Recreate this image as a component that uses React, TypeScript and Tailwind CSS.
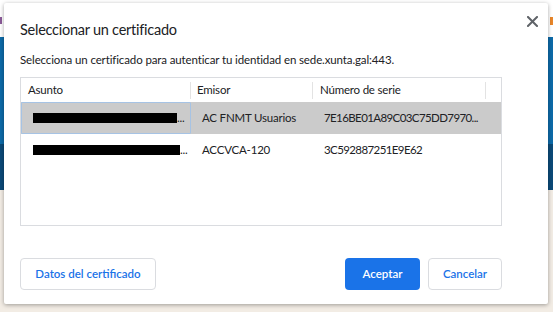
import React from "react";

const font = { fontFamily: 'Lato, "Noto Sans", Arial, sans-serif' };

type Row = { subject: number; issuer: string; serial: string; selected?: boolean };

const rows: Row[] = [
  { subject: 144, issuer: "AC FNMT Usuarios", serial: "7E16BE01A89C03C75DD7970...", selected: true },
  { subject: 147, issuer: "ACCVCA-120", serial: "3C592887251E9E62" },
];

function CloseIcon() {
  return (
    <svg width="11" height="11" viewBox="0 0 11 11" fill="none">
      <path d="M1 1L10 10M10 1L1 10" stroke="#5f6368" strokeWidth="2" strokeLinecap="square" />
    </svg>
  );
}

function Sep() {
  return <div className="h-[17px] w-px shrink-0 bg-[#e3e3e3]" />;
}

export default function App() {
  return (
    <div className="relative h-[312px] w-[553px] overflow-hidden" style={font}>
      {/* page behind the dialog */}
      <div className="flex h-full flex-col">
        <div className="flex h-[37px] items-start justify-between bg-white pt-[17px]">
          <div className="h-[7px] w-[2px] bg-[#8a5a98]" />
          <div className="h-[8px] w-[3px] bg-[#e8862a]" />
        </div>
        <div className="h-[107px] bg-[#0d6aa8]" />
        <div className="h-[46px] bg-[#0b4a78]" />
        <div className="flex-1 bg-[#f2ece4]" />
      </div>

      {/* dialog */}
      <div className="absolute left-[4px] top-[3px] flex h-[301px] w-[544px] flex-col rounded-[2px] bg-white pl-[16px] shadow-[0_1px_4px_rgba(0,0,0,0.35)]">
        <button className="absolute left-[523px] top-[13px] flex">
          <CloseIcon />
        </button>
        <div className="pt-[16px] text-[14.5px] leading-[22px] tracking-[-0.25px] text-[#202124]">
          Seleccionar un certificado
        </div>
        <div className="mt-[10px] text-[11.5px] leading-[18px] tracking-[-0.12px] text-[#202124]">
          Selecciona un certificado para autenticar tu identidad en sede.xunta.gal:443.
        </div>

        <div className="mt-[8px] h-[149px] w-[482px] border border-[#dadce0] text-[11.5px] tracking-[-0.2px] text-[#202124]">
          <div className="flex h-[24px] items-center">
            <div className="w-[169px] shrink-0 pl-[7px]">Asunto</div>
            <Sep />
            <div className="w-[121px] shrink-0 pl-[6px]">Emisor</div>
            <Sep />
            <div className="w-[172px] shrink-0 pl-[7px]">Número de serie</div>
            <Sep />
          </div>
          {rows.map((r, i) => (
            <div
              key={i}
              className={`flex h-[32px] items-center ${r.selected ? "bg-[#cbcbcb]" : ""}`}
            >
              <div
                className={`flex h-full w-[170px] shrink-0 items-center pl-[11px] ${
                  r.selected ? "rounded-[1px] border border-[#a6c3e4] pl-[10px]" : "pl-[12px]"
                }`}
              >
                <div className="h-[10px] shrink-0 bg-black" style={{ width: r.subject }} />
                <span className="leading-none">...</span>
              </div>
              <div className="w-[122px] shrink-0 pl-[11px]">{r.issuer}</div>
              <div className="whitespace-nowrap pl-[11px] tracking-[-0.6px]">{r.serial}</div>
            </div>
          ))}
        </div>

        <div className="mt-[32px] flex w-[482px] items-center text-[11.5px] font-semibold">
          <button className="h-[32px] w-[136px] rounded-[4px] border border-[#dadce0] text-[#1a73e8]">
            Datos del certificado
          </button>
          <button className="ml-auto h-[32px] w-[75px] rounded-[4px] bg-[#1a73e8] text-white">
            Aceptar
          </button>
          <button className="ml-[8px] h-[32px] w-[74px] rounded-[4px] border border-[#dadce0] text-[#1a73e8]">
            Cancelar
          </button>
        </div>
      </div>
    </div>
  );
}
